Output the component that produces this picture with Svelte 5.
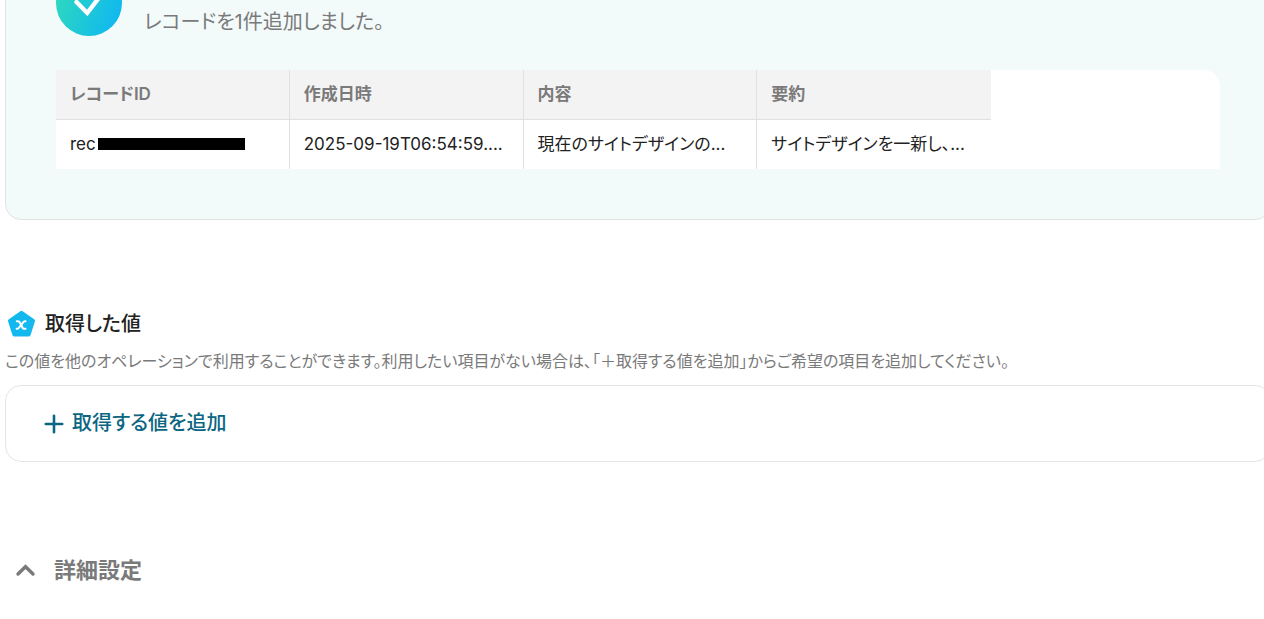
<script lang="ts">
  type Column = {
    key: "id" | "createdAt" | "content" | "summary";
    label: string;
  };

  const columns: Column[] = [
    { key: "id", label: "レコードID" },
    { key: "createdAt", label: "作成日時" },
    { key: "content", label: "内容" },
    { key: "summary", label: "要約" }
  ];

  const records = [
    {
      id: "rec",
      createdAt: "2025-09-19T06:54:59....",
      content: "現在のサイトデザインの...",
      summary: "サイトデザインを一新し、..."
    }
  ];

  let detailsOpen = $state(true);
</script>

<main>
  <section class="result">
    <div class="status">
      <svg class="check" viewBox="0 0 66 66" aria-hidden="true">
        <defs>
          <linearGradient id="check-fill" x1="0" y1="0.3" x2="1" y2="0.7">
            <stop offset="0" stop-color="#2fd9bd" />
            <stop offset="1" stop-color="#0fb8f0" />
          </linearGradient>
        </defs>
        <circle cx="33" cy="33" r="33" fill="url(#check-fill)" />
        <path d="M20.5 32 31.2 43 47 22.5" fill="none" stroke="#fff" stroke-width="4.4" stroke-linecap="round" />
      </svg>
      <p>レコードを1件追加しました。</p>
    </div>

    <div class="table-wrap">
      <table>
        <thead>
          <tr>
            {#each columns as column}<th scope="col">{column.label}</th>{/each}
          </tr>
        </thead>
        <tbody>
          {#each records as record}
            <tr>
              {#each columns as column}
                <td>{record[column.key]}{#if column.key === "id"}<span class="redacted"></span>{/if}</td>
              {/each}
            </tr>
          {/each}
        </tbody>
      </table>
    </div>
  </section>

  <section class="values">
    <h2>
      <svg viewBox="0 0 32 32" aria-hidden="true">
        <path
          d="M16.5 4.8 28 13 23.6 26.6H9.4L5 13Z"
          fill="#13b9ee"
          stroke="#13b9ee"
          stroke-width="4"
          stroke-linejoin="round"
        />
        <path
          d="M11.8 13.2h1.4c.8 0 1.1.3 1.5 1l2.9 5.6c.4.7.7 1 1.5 1h1.4"
          fill="none"
          stroke="#fff"
          stroke-width="2.1"
          stroke-linecap="round"
        />
        <path
          d="M20.6 13.2h-.6c-.7 0-1.1.3-1.6.9l-4.6 5.8c-.5.6-.9.9-1.6.9h-.6"
          fill="none"
          stroke="#fff"
          stroke-width="1.9"
          stroke-linecap="round"
        />
      </svg>
      取得した値
    </h2>
    <p class="hint">
      この値を他のオペレーションで利用することができます。利用したい項目がない場合は、「＋取得する値を追加」からご希望の項目を追加してください。
    </p>
    <div class="add-box">
      <button type="button" class="add">
        <svg viewBox="0 0 20 20" aria-hidden="true">
          <path d="M10 1.8v16.4M1.8 10h16.4" fill="none" stroke="currentColor" stroke-width="2.6" stroke-linecap="round" />
        </svg>
        取得する値を追加
      </button>
    </div>
  </section>

  <button type="button" class="details" aria-expanded={detailsOpen} onclick={() => (detailsOpen = !detailsOpen)}>
    <svg class:closed={!detailsOpen} viewBox="0 0 20 20" aria-hidden="true">
      <path d="M2.5 14 10 6.7l7.5 7.3" fill="none" stroke="currentColor" stroke-width="3.4" stroke-linecap="round" />
    </svg>
    詳細設定
  </button>
</main>

<style>
  :global(body) {
    background: #fff;
    overflow-x: hidden;
  }

  main {
    margin: 0 -7px 0 5px;
    font-family: Inter, "Noto Sans CJK JP", sans-serif;
    font-feature-settings: "palt";
    color: #222;
  }

  p, h2 { margin: 0; }

  button {
    display: flex;
    align-items: center;
    border: 0;
    padding: 0;
    background: none;
    font: inherit;
    font-feature-settings: inherit;
    cursor: pointer;
  }

  /* the panel is scrolled partly out of view */
  .result {
    margin-top: -81px;
    padding: 50px;
    border: 1px solid #e2e4e4;
    border-radius: 16px;
    background: #f2fbfa;
  }

  .status {
    display: flex;
    align-items: flex-end;
    gap: 22px;
    margin-bottom: 34px;
  }
  .status p { font-size: 20px; line-height: 28px; color: #7a7a7a; }
  .check { width: 66px; height: 66px; }

  .table-wrap {
    overflow: hidden;
    border-radius: 0 16px 0 0;
    background: #fff;
  }

  table {
    width: 935px;
    table-layout: fixed;
    border-collapse: separate;
    border-spacing: 0;
    font-size: 17px;
    line-height: 25px;
  }
  th, td {
    padding: 12px 14px;
    text-align: left;
    white-space: nowrap;
    border-right: 1px solid #e0e0e0;
  }
  th {
    border-bottom: 1px solid #e0e0e0;
    background: #f3f3f3;
    color: #7a7a7a;
    font-weight: 600;
  }
  th:last-child, td:last-child { border-right: 0; }

  .redacted {
    display: inline-block;
    width: 147px;
    height: 12px;
    margin-left: 2px;
    background: #000;
  }

  .values { margin-top: 88px; }

  h2 {
    display: flex;
    align-items: center;
    gap: 8px;
    font-size: 20px;
    line-height: 32px;
    font-weight: 500;
  }
  h2 svg { width: 32px; height: 32px; }

  .hint {
    margin-top: 9px;
    font-size: 16px;
    line-height: 24px;
    color: #7a7a7a;
  }

  .add-box {
    margin-top: 12px;
    padding: 23px 38px;
    border: 1px solid #e5e5e5;
    border-radius: 16px;
  }
  .add {
    gap: 8px;
    color: #0b6682;
    font-size: 20px;
    line-height: 29px;
    font-weight: 500;
  }
  .add svg { width: 20px; height: 20px; }

  .details {
    gap: 18px;
    margin: 92px 0 32px 10px;
    color: #7a7a7a;
    font-size: 22px;
    line-height: 32px;
    font-weight: 600;
  }
  .details svg { width: 21px; height: 20px; }
  .closed { transform: rotate(180deg); }
</style>
